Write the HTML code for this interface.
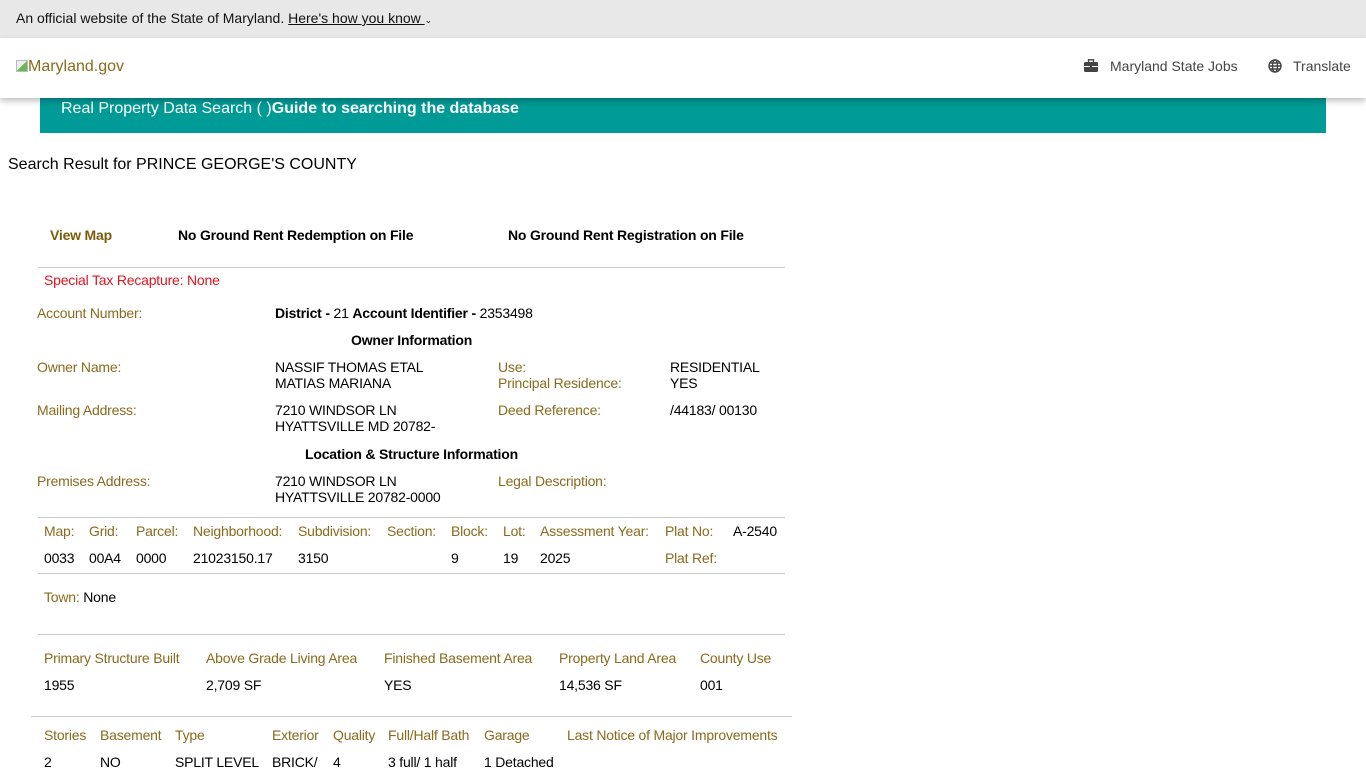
<!DOCTYPE html>
<html><head><meta charset="utf-8"><style>
*{margin:0;padding:0;box-sizing:border-box}
body{width:1366px;height:768px;overflow:hidden;background:#fff;font-family:"Liberation Sans",Arial,sans-serif;font-size:14px;color:#000;position:relative}
.a{position:absolute;line-height:16px;white-space:nowrap;letter-spacing:-0.2px}
.n{letter-spacing:0}
.l{color:#8a6a1e}
.b{font-weight:bold}
.hr{position:absolute;height:1px;background:#ccc}
</style></head><body>
<div style="position:absolute;left:0;top:0;width:1366px;height:38px;background:#e8e8e8"></div>
<div class="a n" style="left:16px;top:10px;color:#111">An official website of the State of Maryland. <span style="text-decoration:underline">Here's how you know </span><span style="font-size:9px">&#8964;</span></div>
<div style="position:absolute;left:0;top:38px;width:1366px;height:60px;background:#fff;box-shadow:0 3px 6px rgba(0,0,0,.25);z-index:2"></div>
<div class="a n" style="left:16px;top:59px;font-size:16px;color:#8a6a1e;z-index:3"><span style="display:inline-block;width:12px;height:12px;border:1px solid #bbb;vertical-align:-1px;background:linear-gradient(135deg,#eee 50%,#6b5 50%)"></span>Maryland.gov</div>
<svg style="position:absolute;left:1084px;top:59px;z-index:3" width="14" height="13" viewBox="0 0 14 13"><rect x="4.5" y="0.8" width="5" height="3" fill="none" stroke="#444" stroke-width="1.4"/><rect x="0" y="3" width="14" height="10" rx="1.5" fill="#444"/><rect x="0" y="7" width="14" height="1" fill="#fff"/><rect x="6" y="6" width="2" height="3" fill="#444"/></svg>
<div class="a n" style="left:1110px;top:58px;color:#444;z-index:3">Maryland State Jobs</div>
<svg style="position:absolute;left:1268px;top:59px;z-index:3" width="14" height="14" viewBox="0 0 14 14" fill="none" stroke="#444" stroke-width="1.4"><circle cx="7" cy="7" r="6"/><ellipse cx="7" cy="7" rx="2.5" ry="6"/><path d="M1 7h12M2 4h10M2 10h10"/></svg>
<div class="a n" style="left:1293px;top:58px;color:#444;z-index:3">Translate</div>
<div style="position:absolute;left:40px;top:94px;width:1286px;height:39px;background:#009b96"></div>
<div class="a n" style="left:61px;top:101px;font-size:16px;color:#fff">Real Property Data Search ( )<b>Guide to searching the database</b></div>
<div class="a n" style="left:8px;top:157px;font-size:16px">Search Result for PRINCE GEORGE'S COUNTY</div>

<div class="a b" style="left:50px;top:227px;color:#7a5c0a">View Map</div>
<div class="a b" style="left:178px;top:227px">No Ground Rent Redemption on File</div>
<div class="a b" style="left:508px;top:227px">No Ground Rent Registration on File</div>
<div class="hr" style="left:38px;top:267px;width:747px"></div>
<div class="a" style="left:44px;top:272px;color:#e0141e">Special Tax Recapture: None</div>
<div class="a l" style="left:37px;top:305px">Account Number:</div>
<div class="a" style="left:275px;top:305px"><b>District - </b>21 <b>Account Identifier - </b>2353498</div>
<div class="a b" style="left:351px;top:332px">Owner Information</div>
<div class="a l" style="left:37px;top:359px">Owner Name:</div>
<div class="a" style="left:275px;top:359px">NASSIF THOMAS ETAL<br>MATIAS MARIANA</div>
<div class="a l" style="left:498px;top:359px">Use:<br>Principal Residence:</div>
<div class="a" style="left:670px;top:359px">RESIDENTIAL<br>YES</div>
<div class="a l" style="left:37px;top:402px">Mailing Address:</div>
<div class="a" style="left:275px;top:402px">7210 WINDSOR LN<br>HYATTSVILLE MD 20782-</div>
<div class="a l" style="left:498px;top:402px">Deed Reference:</div>
<div class="a" style="left:670px;top:402px">/44183/ 00130</div>
<div class="a b" style="left:305px;top:446px">Location &amp; Structure Information</div>
<div class="a l" style="left:37px;top:473px">Premises Address:</div>
<div class="a" style="left:275px;top:473px">7210 WINDSOR LN<br>HYATTSVILLE 20782-0000</div>
<div class="a l" style="left:498px;top:473px">Legal Description:</div>
<div class="hr" style="left:38px;top:517px;width:747px"></div>
<div class="a l" style="left:44px;top:523px">Map:</div><div class="a l" style="left:89px;top:523px">Grid:</div><div class="a l" style="left:136px;top:523px">Parcel:</div><div class="a l" style="left:193px;top:523px">Neighborhood:</div><div class="a l" style="left:298px;top:523px">Subdivision:</div><div class="a l" style="left:387px;top:523px">Section:</div><div class="a l" style="left:451px;top:523px">Block:</div><div class="a l" style="left:503px;top:523px">Lot:</div><div class="a l" style="left:540px;top:523px">Assessment Year:</div><div class="a l" style="left:665px;top:523px">Plat No:</div><div class="a" style="left:733px;top:523px">A-2540</div>
<div class="a" style="left:44px;top:550px">0033</div><div class="a" style="left:89px;top:550px">00A4</div><div class="a" style="left:136px;top:550px">0000</div><div class="a" style="left:193px;top:550px">21023150.17</div><div class="a" style="left:298px;top:550px">3150</div><div class="a" style="left:451px;top:550px">9</div><div class="a" style="left:503px;top:550px">19</div><div class="a" style="left:540px;top:550px">2025</div><div class="a l" style="left:665px;top:550px">Plat Ref:</div>
<div class="hr" style="left:38px;top:573px;width:747px"></div>
<div class="a" style="left:44px;top:589px"><span class="l">Town:</span> None</div>
<div class="hr" style="left:38px;top:634px;width:747px"></div>
<div class="a l" style="left:44px;top:650px">Primary Structure Built</div><div class="a l" style="left:206px;top:650px">Above Grade Living Area</div><div class="a l" style="left:384px;top:650px">Finished Basement Area</div><div class="a l" style="left:559px;top:650px">Property Land Area</div><div class="a l" style="left:700px;top:650px">County Use</div>
<div class="a" style="left:44px;top:677px">1955</div><div class="a" style="left:206px;top:677px">2,709 SF</div><div class="a" style="left:384px;top:677px">YES</div><div class="a" style="left:559px;top:677px">14,536 SF</div><div class="a" style="left:700px;top:677px">001</div>
<div class="hr" style="left:31px;top:716px;width:761px"></div>
<div class="a l" style="left:44px;top:727px">Stories</div><div class="a l" style="left:100px;top:727px">Basement</div><div class="a l" style="left:175px;top:727px">Type</div><div class="a l" style="left:272px;top:727px">Exterior</div><div class="a l" style="left:333px;top:727px">Quality</div><div class="a l" style="left:388px;top:727px">Full/Half Bath</div><div class="a l" style="left:484px;top:727px">Garage</div><div class="a l" style="left:567px;top:727px">Last Notice of Major Improvements</div>
<div class="a" style="left:44px;top:754px">2</div><div class="a" style="left:100px;top:754px">NO</div><div class="a" style="left:175px;top:754px">SPLIT LEVEL</div><div class="a" style="left:272px;top:754px">BRICK/</div><div class="a" style="left:333px;top:754px">4</div><div class="a" style="left:388px;top:754px">3 full/ 1 half</div><div class="a" style="left:484px;top:754px">1 Detached</div>
</body></html>
